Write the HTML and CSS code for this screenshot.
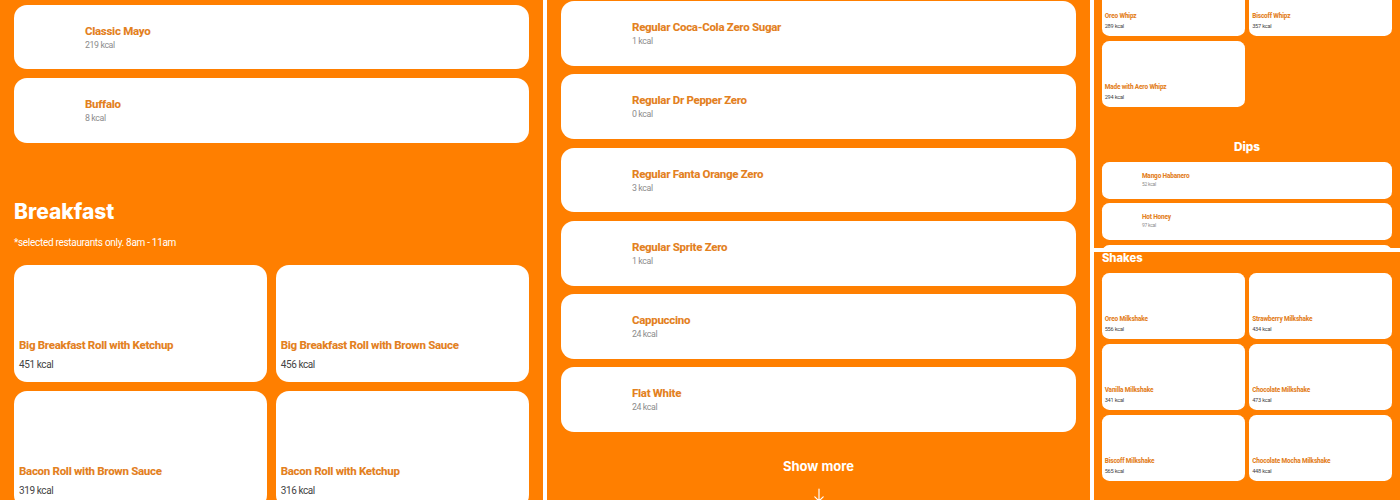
FILE: index.html
```html
<!DOCTYPE html>
<html lang="en">
<head>
  <meta charset="UTF-8">
  <meta name="viewport" content="width=device-width, initial-scale=1.0">
  <title>Menu nutrition</title>
  <link rel="stylesheet" href="styles.css">
</head>
<body>
  <div class="page-grid">

    <!-- Sauces into breakfast -->
    <section class="panel panel-tall">
      <div class="panel-content offset-sauces">
        <div class="item-list">
          <div class="list-card"><div class="thumb"></div><div><h3 class="item-name">Classic Mayo</h3><p class="item-kcal">219 kcal</p></div></div>
          <div class="list-card"><div class="thumb"></div><div><h3 class="item-name">Buffalo</h3><p class="item-kcal">8 kcal</p></div></div>
        </div>

        <h2 class="section-title title-breakfast">Breakfast</h2>
        <p class="section-note">*selected restaurants only. 8am - 11am</p>
        <div class="item-grid">
          <div class="grid-card"><h3 class="item-name">Big Breakfast Roll with Ketchup</h3><p class="item-kcal">451 kcal</p></div>
          <div class="grid-card"><h3 class="item-name">Big Breakfast Roll with Brown Sauce</h3><p class="item-kcal">456 kcal</p></div>
          <div class="grid-card"><h3 class="item-name">Bacon Roll with Brown Sauce</h3><p class="item-kcal">319 kcal</p></div>
          <div class="grid-card"><h3 class="item-name">Bacon Roll with Ketchup</h3><p class="item-kcal">316 kcal</p></div>
        </div>
      </div>
    </section>

    <!-- Drinks -->
    <section class="panel panel-tall">
      <div class="panel-content offset-drinks">
        <div class="item-list">
          <div class="list-card"><div class="thumb"></div><div><h3 class="item-name">Regular Coca-Cola Zero Sugar</h3><p class="item-kcal">1 kcal</p></div></div>
          <div class="list-card"><div class="thumb"></div><div><h3 class="item-name">Regular Dr Pepper Zero</h3><p class="item-kcal">0 kcal</p></div></div>
          <div class="list-card"><div class="thumb"></div><div><h3 class="item-name">Regular Fanta Orange Zero</h3><p class="item-kcal">3 kcal</p></div></div>
          <div class="list-card"><div class="thumb"></div><div><h3 class="item-name">Regular Sprite Zero</h3><p class="item-kcal">1 kcal</p></div></div>
          <div class="list-card"><div class="thumb"></div><div><h3 class="item-name">Cappuccino</h3><p class="item-kcal">24 kcal</p></div></div>
          <div class="list-card"><div class="thumb"></div><div><h3 class="item-name">Flat White</h3><p class="item-kcal">24 kcal</p></div></div>
        </div>
        <div class="show-more">
          <span>Show more</span>
          <svg class="arrow-icon" viewBox="0 0 12 14" width="12" height="14" fill="none" stroke="#fff" stroke-width="1.2" stroke-linecap="round" stroke-linejoin="round">
            <path d="M6 1v12M1.8 8.8L6 13l4.2-4.2"/>
          </svg>
        </div>
      </div>
    </section>

    <!-- Whipz and dips -->
    <section class="panel panel-small">
      <div class="panel-content offset-whipz">
        <div class="item-grid">
          <div class="grid-card"><h3 class="item-name">Oreo Whipz</h3><p class="item-kcal">289 kcal</p></div>
          <div class="grid-card"><h3 class="item-name">Biscoff Whipz</h3><p class="item-kcal">357 kcal</p></div>
          <div class="grid-card"><h3 class="item-name">Made with Aero Whipz</h3><p class="item-kcal">294 kcal</p></div>
        </div>

        <h2 class="section-title title-dips">Dips</h2>
        <div class="item-list">
          <div class="list-card"><div class="thumb"></div><div><h3 class="item-name">Mango Habanero</h3><p class="item-kcal">52 kcal</p></div></div>
          <div class="list-card"><div class="thumb"></div><div><h3 class="item-name">Hot Honey</h3><p class="item-kcal">97 kcal</p></div></div>
          <div class="list-card"><div class="thumb"></div></div>
        </div>
      </div>
    </section>

    <!-- Shakes -->
    <section class="panel panel-small">
      <div class="panel-content offset-shakes">
        <h2 class="section-title title-shakes">Shakes</h2>
        <div class="item-grid">
          <div class="grid-card"><h3 class="item-name">Oreo Milkshake</h3><p class="item-kcal">556 kcal</p></div>
          <div class="grid-card"><h3 class="item-name">Strawberry Milkshake</h3><p class="item-kcal">434 kcal</p></div>
          <div class="grid-card"><h3 class="item-name">Vanilla Milkshake</h3><p class="item-kcal">341 kcal</p></div>
          <div class="grid-card"><h3 class="item-name">Chocolate Milkshake</h3><p class="item-kcal">473 kcal</p></div>
          <div class="grid-card"><h3 class="item-name">Biscoff Milkshake</h3><p class="item-kcal">565 kcal</p></div>
          <div class="grid-card"><h3 class="item-name">Chocolate Mocha Milkshake</h3><p class="item-kcal">448 kcal</p></div>
        </div>
      </div>
    </section>

  </div>
</body>
</html>
```

FILE: styles.css
```css
html, body {
  height: 100%;
  margin: 0;
  overflow: hidden;
  background: #fff;
}
body {
  font-family: Inter, 'Noto Sans', sans-serif;
}
h2, h3, p {
  margin: 0;
}

.page-grid {
  display: grid;
  grid-template-columns: 543px 543px 306px;
  grid-template-rows: 248px 248px;
  gap: 4px;
  height: 500px;
}
.panel {
  background: #ff7f00;
  overflow: hidden;
}
.panel-tall {
  grid-row: span 2;
}
.panel-content {
  padding: 0 14px;
}
/* right column is the same page at a smaller size */
.panel-small .panel-content {
  zoom: 0.5635;
}

/* each panel is a screenshot of a scrolled page */
.offset-sauces { margin-top: 4.6px; }
.offset-drinks { margin-top: 1px; }
.offset-whipz { margin-top: -54px; }
.offset-shakes { margin-top: -2.5px; }

.item-list {
  display: flex;
  flex-direction: column;
  gap: 8.4px;
}
.list-card {
  display: flex;
  align-items: center;
  height: 64.9px;
  background: #fff;
  border-radius: 13px;
}
.thumb {
  flex: none;
  width: 71px;
}
.item-grid {
  display: grid;
  grid-template-columns: 1fr 1fr;
  gap: 8.4px;
}
.grid-card {
  display: flex;
  flex-direction: column;
  justify-content: flex-end;
  height: 117.6px;
  padding: 0 5px 11px;
  box-sizing: border-box;
  background: #fff;
  border-radius: 13px;
}
.panel-small .grid-card {
  padding-bottom: 10px;
}

.item-name {
  margin-top: 1px;
  font-family: Roboto, Inter, sans-serif;
  font-size: 11.5px;
  line-height: 14px;
  font-weight: 800;
  letter-spacing: -0.3px;
  color: #e3811f;
}
.item-kcal {
  margin-top: 1px;
  font-family: Roboto, Inter, sans-serif;
  font-size: 8.8px;
  line-height: 13px;
  letter-spacing: -0.4px;
  color: #8c8c8c;
}
.grid-card .item-kcal {
  margin-top: 6px;
  font-size: 10px;
  color: #444;
}
.panel-small .grid-card .item-kcal {
  margin-top: 4px;
}

.section-title {
  font-weight: 800;
  color: #fff;
}
.title-breakfast {
  margin-top: 56px;
  font-size: 21px;
  line-height: 26px;
}
.section-note {
  margin: 11.5px 0 14.5px;
  font-family: Roboto, Inter, sans-serif;
  font-size: 10px;
  line-height: 14px;
  letter-spacing: -0.3px;
  color: #fff;
}
.title-dips {
  margin: 59px 0 13px;
  font-size: 21px;
  line-height: 26px;
  text-align: center;
}
.title-shakes {
  margin-bottom: 14px;
  font-size: 20px;
  line-height: 26px;
}

.show-more {
  display: flex;
  flex-direction: column;
  align-items: center;
  gap: 14px;
  margin-top: 26px;
  font-size: 13px;
  line-height: 16px;
  font-weight: 700;
  color: #fff;
}
```
